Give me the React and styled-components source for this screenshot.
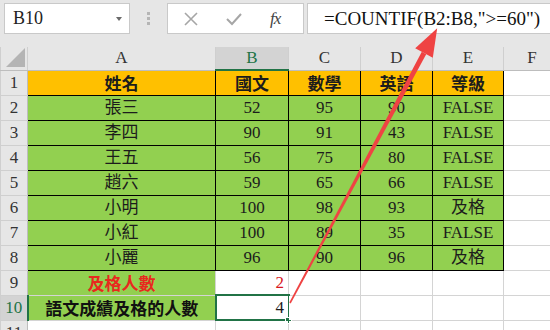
import React from 'react';
import styled, { createGlobalStyle } from 'styled-components';

const GlobalStyle = createGlobalStyle`
  html, body {
    margin: 0;
    padding: 0;
    background: #ffffff;
    overflow: hidden;
  }
  body {
    font-family: "Liberation Serif", "Noto Sans CJK TC", serif;
  }
`;

const serif = `"Liberation Serif", "Noto Sans CJK TC", serif`;

const Page = styled.div`
  position: relative;
  width: 550px;
  height: 330px;
  overflow: hidden;
  background: #ffffff;
`;

const Toolbar = styled.div`
  display: flex;
  align-items: flex-start;
  height: 47px;
  padding-top: 3px;
  box-sizing: border-box;
  background: #e6e6e6;
`;

const NameBox = styled.div`
  display: flex;
  align-items: center;
  justify-content: space-between;
  margin-left: 4px;
  width: 126px;
  height: 31px;
  box-sizing: border-box;
  padding: 0 7px 0 8px;
  background: #ffffff;
  border: 1px solid #c9c9c9;
  font-family: ${serif};
  font-size: 18px;
  color: #222;
`;

const Caret = styled.span`
  width: 0;
  height: 0;
  border-left: 3px solid transparent;
  border-right: 3px solid transparent;
  border-top: 4px solid #6a6a6a;
`;

const Grip = styled.div`
  display: flex;
  flex-direction: column;
  gap: 2px;
  margin: 9px 17px 0 17px;
  width: 3px;

  span {
    display: block;
    width: 3px;
    height: 3px;
    background: #b5b5b5;
  }
`;

const FxBox = styled.div`
  display: flex;
  align-items: center;
  width: 137px;
  height: 31px;
  box-sizing: border-box;
  padding-left: 16px;
  gap: 28px;
  background: #ffffff;
  border: 1px solid #c9c9c9;
`;

const FxLabel = styled.span`
  font-family: ${serif};
  font-style: italic;
  font-size: 17px;
  color: #444;
  letter-spacing: -1px;
`;

const FormulaInput = styled.div`
  flex: 1;
  margin-left: 3px;
  height: 31px;
  box-sizing: border-box;
  padding-left: 16px;
  display: flex;
  align-items: center;
  background: #ffffff;
  border: 1px solid #c9c9c9;
  border-right: none;
  font-family: ${serif};
  font-size: 19px;
  color: #111;
  white-space: nowrap;
`;

const Sheet = styled.table`
  border-collapse: collapse;
  table-layout: fixed;
  width: 560px;
  font-family: ${serif};
`;

const HeadCell = styled.th`
  position: relative;
  height: 22px;
  padding: 0;
  font-weight: normal;
  font-size: 17px;
  background: ${(p) => (p.$active ? '#d3d3d3' : '#e6e6e6')};
  color: ${(p) => (p.$active ? '#217346' : '#333')};
  border: 1px solid #cfcfcf;
  border-top: none;
  border-bottom: ${(p) => (p.$active ? '2px solid #217346' : '1px solid #bdbdbd')};
`;

const Corner = styled.span`
  position: absolute;
  right: 2px;
  bottom: 3px;
  width: 0;
  height: 0;
  border-left: 19px solid transparent;
  border-bottom: 19px solid #b4b4b4;
`;

const Row = styled.tr`
  height: 25px;
`;

const RowHead = styled.th`
  padding: 0;
  font-weight: normal;
  font-size: 17px;
  text-align: center;
  background: ${(p) => (p.$active ? '#d3d3d3' : '#e6e6e6')};
  color: ${(p) => (p.$active ? '#217346' : '#333')};
  border: 1px solid #cfcfcf;
  border-right: ${(p) => (p.$active ? '2px solid #217346' : '1px solid #bdbdbd')};
`;

const fills = {
  head: '#ffc000',
  data: '#92d050',
  none: '#ffffff',
};

const Cell = styled.td`
  position: relative;
  padding: 0 ${(p) => (p.$align === 'right' ? '4px' : '0')} 0 0;
  height: 23px;
  line-height: 23px;
  overflow: visible;
  white-space: nowrap;
  text-align: ${(p) => p.$align || 'center'};
  background: ${(p) => fills[p.$fill || 'none']};
  border: 1px solid ${(p) => (p.$boxed ? '#000000' : '#d4d4d4')};
  font-size: 17px;
  font-weight: ${(p) => (p.$bold ? 'bold' : 'normal')};
  color: ${(p) => p.$color || '#1c1c1c'};
  font-family: ${(p) =>
    p.$bold ? `"Noto Sans CJK TC", serif` : serif};
`;

const SelectedCell = styled(Cell)`
  outline: 2px solid #217346;
  outline-offset: -1px;
`;

const Handle = styled.span`
  position: absolute;
  right: -4px;
  bottom: -4px;
  width: 5px;
  height: 5px;
  background: #217346;
  border: 1px solid #ffffff;
`;

const Overlay = styled.svg`
  position: absolute;
  left: 0;
  top: 0;
  pointer-events: none;
`;

const rows = [
  ['張三', 52, 95, 90, 'FALSE'],
  ['李四', 90, 91, 43, 'FALSE'],
  ['王五', 56, 75, 80, 'FALSE'],
  ['趙六', 59, 65, 66, 'FALSE'],
  ['小明', 100, 98, 93, '及格'],
  ['小紅', 100, 89, 35, 'FALSE'],
  ['小麗', 96, 90, 96, '及格'],
];

const columns = ['A', 'B', 'C', 'D', 'E', 'F'];

function CrossIcon() {
  return (
    <svg width="14" height="14" viewBox="0 0 14 14">
      <path d="M1 1 L13 13 M13 1 L1 13" stroke="#a6a6a6" strokeWidth="1.6" fill="none" />
    </svg>
  );
}

function CheckIcon() {
  return (
    <svg width="16" height="14" viewBox="0 0 16 14">
      <path d="M1 7 L6 12 L15 2" stroke="#a6a6a6" strokeWidth="2" fill="none" />
    </svg>
  );
}

function Arrow() {
  return (
    <Overlay width="550" height="330" viewBox="0 0 550 330">
      <polygon
        points="290.7,303.4 289.3,302.6 421.8,51.8 426.2,54.2"
        fill="#ef4343"
      />
      <polygon points="437.2,28.3 432.8,57.7 415.2,48.3" fill="#ef4343" />
    </Overlay>
  );
}

export default function App() {
  return (
    <Page>
      <GlobalStyle />
      <Toolbar>
        <NameBox>
          B10
          <Caret />
        </NameBox>
        <Grip>
          <span />
          <span />
          <span />
        </Grip>
        <FxBox>
          <CrossIcon />
          <CheckIcon />
          <FxLabel>fx</FxLabel>
        </FxBox>
        <FormulaInput>=COUNTIF(B2:B8,"&gt;=60")</FormulaInput>
      </Toolbar>

      <Sheet>
        <colgroup>
          <col style={{ width: 27 }} />
          <col style={{ width: 188 }} />
          <col style={{ width: 73 }} />
          <col style={{ width: 72 }} />
          <col style={{ width: 72 }} />
          <col style={{ width: 71 }} />
          <col style={{ width: 57 }} />
        </colgroup>
        <thead>
          <tr>
            <HeadCell>
              <Corner />
            </HeadCell>
            {columns.map((c) => (
              <HeadCell key={c} $active={c === 'B'}>
                {c}
              </HeadCell>
            ))}
          </tr>
        </thead>
        <tbody>
          <Row>
            <RowHead>1</RowHead>
            {['姓名', '國文', '數學', '英語', '等級'].map((h) => (
              <Cell key={h} $fill="head" $boxed $bold>
                {h}
              </Cell>
            ))}
            <Cell />
          </Row>
          {rows.map((r, i) => (
            <Row key={r[0]}>
              <RowHead>{i + 2}</RowHead>
              {r.map((v, j) => (
                <Cell key={j} $fill="data" $boxed>
                  {v}
                </Cell>
              ))}
              <Cell />
            </Row>
          ))}
          <Row>
            <RowHead>9</RowHead>
            <Cell $fill="data" $bold $color="#e8281e">
              及格人數
            </Cell>
            <Cell $align="right" $color="#d8141c">
              2
            </Cell>
            <Cell />
            <Cell />
            <Cell />
            <Cell />
          </Row>
          <Row>
            <RowHead $active>10</RowHead>
            <Cell $fill="data" $bold $color="#111">
              語文成績及格的人數
            </Cell>
            <SelectedCell $align="right">
              4
              <Handle />
            </SelectedCell>
            <Cell />
            <Cell />
            <Cell />
            <Cell />
          </Row>
          <Row>
            <RowHead>11</RowHead>
            <Cell />
            <Cell />
            <Cell />
            <Cell />
            <Cell />
            <Cell />
          </Row>
        </tbody>
      </Sheet>
      <Arrow />
    </Page>
  );
}
